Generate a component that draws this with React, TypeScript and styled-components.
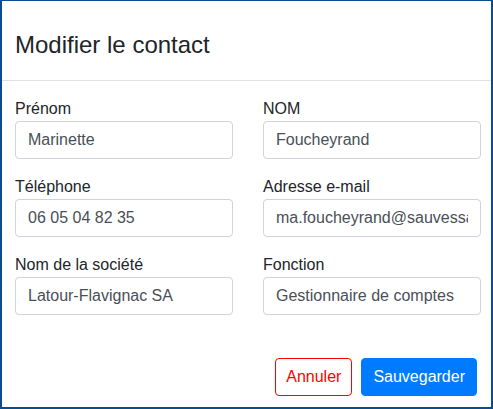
import React from "react";
import styled, { createGlobalStyle } from "styled-components";

const Global = createGlobalStyle`
  html, body { margin: 0; padding: 0; background: #fff; }
  body { font-family: "Liberation Sans", Arial, sans-serif; color: #212529; }
  * { box-sizing: border-box; }
`;

const Dialog = styled.div`
  width: 493px;
  height: 409px;
  border-style: solid;
  border-color: #0a4c8c;
  border-width: 1px 2px 2px 2px;
  display: flex;
  flex-direction: column;
  background: #fff;
`;

const Header = styled.div`
  padding: 26px 13px 17px;
  border-bottom: 1px solid #dee2e6;
`;

const Title = styled.h4`
  margin: 0;
  font-size: 24px;
  font-weight: 400;
  line-height: 36px;
  color: #212529;
`;

const Body = styled.div`
  padding: 16px 10px 0 13px;
  display: grid;
  grid-template-columns: 218px 218px;
  column-gap: 30px;
  row-gap: 16px;
`;

const Field = styled.div`
  display: flex;
  flex-direction: column;
`;

const Label = styled.label`
  font-size: 16px;
  line-height: 24px;
  color: #212529;
`;

const Input = styled.input`
  height: 38px;
  width: 100%;
  padding: 6px 12px;
  font-family: "Liberation Sans", Arial, sans-serif;
  font-size: 16px;
  line-height: 24px;
  color: #495057;
  background: #fff;
  border: 1px solid #ced4da;
  border-radius: 4px;
  outline: none;
`;

const Footer = styled.div`
  margin-top: auto;
  display: flex;
  justify-content: flex-end;
  gap: 9px;
  padding: 0 14px 11px 0;
`;

const Button = styled.button<{ $variant: "outline" | "primary" }>`
  height: 38px;
  padding: ${(p) => (p.$variant === "primary" ? "6px 11px" : "6px 10px")};
  font-family: "Liberation Sans", Arial, sans-serif;
  font-size: 16px;
  line-height: 24px;
  border-radius: 4px;
  cursor: pointer;
  border: 1px solid ${(p) => (p.$variant === "primary" ? "#007bff" : "#ff0000")};
  background: ${(p) => (p.$variant === "primary" ? "#007bff" : "#fff")};
  color: ${(p) => (p.$variant === "primary" ? "#fff" : "#ff0000")};
`;

const fields = [
  { label: "Prénom", value: "Marinette" },
  { label: "NOM", value: "Foucheyrand" },
  { label: "Téléphone", value: "06 05 04 82 35" },
  { label: "Adresse e-mail", value: "ma.foucheyrand@sauvessanges.fr" },
  { label: "Nom de la société", value: "Latour-Flavignac SA" },
  { label: "Fonction", value: "Gestionnaire de comptes" },
];

export default function App() {
  return (
    <>
      <Global />
      <Dialog>
        <Header>
          <Title>Modifier le contact</Title>
        </Header>
        <Body>
          {fields.map((f) => (
            <Field key={f.label}>
              <Label>{f.label}</Label>
              <Input defaultValue={f.value} />
            </Field>
          ))}
        </Body>
        <Footer>
          <Button $variant="outline">Annuler</Button>
          <Button $variant="primary">Sauvegarder</Button>
        </Footer>
      </Dialog>
    </>
  );
}
